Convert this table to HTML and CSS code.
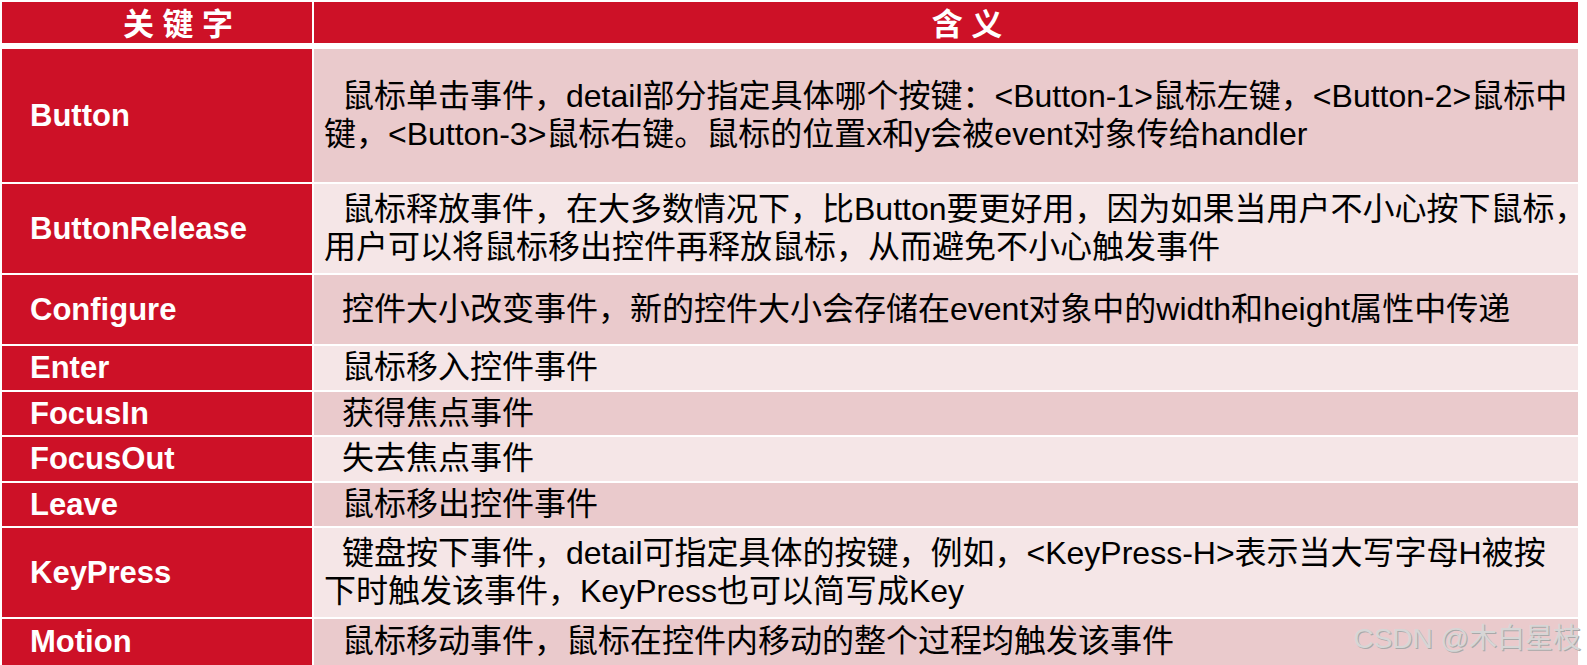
FILE: index.html
```html
<!DOCTYPE html>
<html lang="zh">
<head>
<meta charset="utf-8">
<title>事件关键字</title>
<link rel="stylesheet" href="styles.css">
</head>
<body>
<div class="page">
  <div class="thead">
    <div class="hcell">关 键 字</div>
    <div class="hcell">含 义</div>
  </div>
  <div class="tbody">
    <div class="key r-button">Button</div>
    <div class="desc dark">鼠标单击事件，detail部分指定具体哪个按键：&lt;Button-1&gt;鼠标左键，&lt;Button-2&gt;鼠标中<br>键，&lt;Button-3&gt;鼠标右键。鼠标的位置x和y会被event对象传给handler</div>

    <div class="key">ButtonRelease</div>
    <div class="desc light">鼠标释放事件，在大多数情况下，比Button要更好用，因为如果当用户不小心按下鼠标，<br>用户可以将鼠标移出控件再释放鼠标，从而避免不小心触发事件</div>

    <div class="key">Configure</div>
    <div class="desc dark">控件大小改变事件，新的控件大小会存储在event对象中的width和height属性中传递</div>

    <div class="key">Enter</div>
    <div class="desc light">鼠标移入控件事件</div>

    <div class="key">FocusIn</div>
    <div class="desc dark">获得焦点事件</div>

    <div class="key">FocusOut</div>
    <div class="desc light">失去焦点事件</div>

    <div class="key">Leave</div>
    <div class="desc dark">鼠标移出控件事件</div>

    <div class="key">KeyPress</div>
    <div class="desc light">键盘按下事件，detail可指定具体的按键，例如，&lt;KeyPress-H&gt;表示当大写字母H被按<br>下时触发该事件，KeyPress也可以简写成Key</div>

    <div class="key">Motion</div>
    <div class="desc dark">鼠标移动事件，鼠标在控件内移动的整个过程均触发该事件</div>
  </div>
  <div class="watermark">CSDN @木白星枝</div>
</div>
</body>
</html>
```
FILE: styles.css
```css
html, body {
  margin: 0;
  padding: 0;
  background: #ffffff;
  overflow: hidden;
}

.page {
  position: relative;
  width: 1587px;
  height: 665px;
  padding: 2px 0 0 2px;
  box-sizing: border-box;
  overflow: hidden;
}

.thead,
.tbody {
  display: grid;
  grid-template-columns: 310px 1264px;
  column-gap: 2px;
}

.thead {
  grid-template-rows: 41px;
  margin-bottom: 6px;
}

.tbody {
  grid-template-rows: 133px 89px 69px 44px 43px 44px 43px 89px 46px;
  row-gap: 2px;
}

.hcell {
  background: #cd1127;
  color: #ffffff;
  font-family: "Liberation Sans", "Noto Sans CJK SC", sans-serif;
  font-weight: 700;
  font-size: 31px;
  display: flex;
  align-items: center;
  justify-content: center;
  padding-left: 42px;
  padding-bottom: 2px;
  box-sizing: border-box;
}

.key {
  background: #cd1127;
  color: #ffffff;
  font-family: "Liberation Sans", Arial, sans-serif;
  font-weight: 700;
  font-size: 31px;
  display: flex;
  align-items: center;
  padding-left: 28px;
}

.desc {
  color: #000000;
  font-family: "Liberation Sans", "Noto Sans CJK SC", sans-serif;
  font-size: 32px;
  line-height: 37.5px;
  display: flex;
  flex-direction: column;
  justify-content: center;
  padding-left: 10px;
  text-indent: 18px;
  white-space: nowrap;
}

.dark {
  background: #eacacc;
}

.light {
  background: #f5e6e7;
}

.watermark {
  position: absolute;
  right: 6px;
  top: 622px;
  font-family: "Liberation Sans", "Noto Sans CJK SC", sans-serif;
  font-size: 28px;
  line-height: 34px;
  color: #d6d6d6;
  text-shadow: 1px 1px 0 #a9a9a9;
}
```
